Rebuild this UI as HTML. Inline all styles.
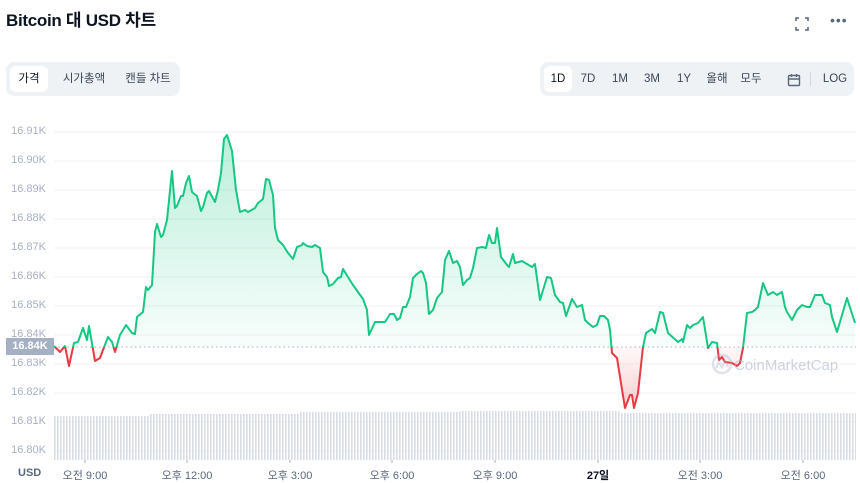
<!DOCTYPE html>
<html><head><meta charset="utf-8"><style>
body{margin:0;width:860px;height:482px;background:#fff;font-family:"Liberation Sans","Noto Sans CJK KR",sans-serif;overflow:hidden;position:relative;color:#0d1421}
.t{position:absolute;left:6px;top:6px;font-size:17px;font-weight:bold;letter-spacing:-0.3px}
.grp{position:absolute;top:62px;height:34px;background:#eff2f5;border-radius:8px}
.b{position:absolute;top:4px;height:26px;line-height:26px;font-size:11.5px;color:#3a4556;text-align:center}
.b.on{background:#fff;border-radius:6px;color:#0d1421}
.yl{position:absolute;right:814px;font-size:11px;color:#a6b0c3;text-align:right}
.xl{position:absolute;top:467px;font-size:11px;color:#58667e;transform:translateX(-50%);white-space:nowrap}
</style></head><body>
<div class="t">Bitcoin 대 USD 차트</div>
<svg style="position:absolute;left:794px;top:16px" width="16" height="16" viewBox="0 0 16 16" fill="none" stroke="#58667e" stroke-width="1.6"><path d="M2 5V2h3M11 2h3v3M14 11v3h-3M5 14H2v-3"/></svg>
<div style="position:absolute;left:830px;top:12px;font-size:14px;color:#58667e;letter-spacing:1px">•••</div>
<div class="grp" style="left:6px;width:174px">
<div class="b on" style="left:4px;width:38px">가격</div>
<div class="b" style="left:46px;width:64px">시가총액</div>
<div class="b" style="left:110px;width:64px">캔들 차트</div>
</div>
<div class="grp" style="left:540px;width:314px">
<div class="b on" style="left:4px;width:28px">1D</div>
<div class="b" style="left:34px;width:28px">7D</div>
<div class="b" style="left:66px;width:28px">1M</div>
<div class="b" style="left:98px;width:28px">3M</div>
<div class="b" style="left:130px;width:28px">1Y</div>
<div class="b" style="left:162px;width:30px">올해</div>
<div class="b" style="left:196px;width:30px">모두</div>
<svg style="position:absolute;left:247px;top:11px" width="14" height="14" viewBox="0 0 14 14" fill="none" stroke="#58667e" stroke-width="1.4"><rect x="1.5" y="2.5" width="11" height="10" rx="1"/><path d="M1.5 6h11M4.5 1v3M9.5 1v3"/></svg>
<div style="position:absolute;left:270px;top:10px;width:1px;height:14px;background:#cfd6e4"></div>
<div class="b" style="left:278px;width:34px">LOG</div>
</div>
<div class="yl" style="top:125px">16.91K</div>
<div class="yl" style="top:154px">16.90K</div>
<div class="yl" style="top:183px">16.89K</div>
<div class="yl" style="top:212px">16.88K</div>
<div class="yl" style="top:241px">16.87K</div>
<div class="yl" style="top:270px">16.86K</div>
<div class="yl" style="top:299px">16.85K</div>
<div class="yl" style="top:328px">16.84K</div>
<div class="yl" style="top:357px">16.83K</div>
<div class="yl" style="top:386px">16.82K</div>
<div class="yl" style="top:415px">16.81K</div>
<div class="yl" style="top:444px">16.80K</div>
<div style="position:absolute;left:6px;top:338px;width:48px;height:17px;background:#a6b0c3;color:#fff;font-size:11px;font-weight:bold;line-height:17px;text-align:center">16.84K</div>
<div style="position:absolute;left:18px;top:467px;font-size:11px;font-weight:bold;color:#58667e">USD</div>
<svg style="position:absolute;left:0;top:0" width="860" height="482">
<defs>
<linearGradient id="gg" x1="0" y1="130" x2="0" y2="347" gradientUnits="userSpaceOnUse"><stop offset="0" stop-color="#16c784" stop-opacity="0.3"/><stop offset="1" stop-color="#16c784" stop-opacity="0.03"/></linearGradient>
<linearGradient id="rg" x1="0" y1="347" x2="0" y2="410" gradientUnits="userSpaceOnUse"><stop offset="0" stop-color="#ea3943" stop-opacity="0.03"/><stop offset="1" stop-color="#ea3943" stop-opacity="0.25"/></linearGradient>
<clipPath id="up"><rect x="0" y="0" width="860" height="347"/></clipPath>
<clipPath id="dn"><rect x="0" y="347" width="860" height="135"/></clipPath>
<pattern id="vb" width="3" height="10" patternUnits="userSpaceOnUse"><rect width="1.6" height="10" fill="#d8dce4"/></pattern>
<path id="p" d="M54,346 60,352 65,346 69,366 74,343 78,342 83,328 87,340 89,326 95,361 100,358 103,350 108,337 112,342 115,352 120,335 126,325 132,333 135,334 137,317 143,312 146,287 148,290 152,285 155,232 157,224 161,237 163,235 167,220 172,171 175,208 177,206 181,196 183,196 186,183 189,176 192,192 197,196 201,211 203,207 207,193 209,191 215,202 218,190 221,173 224,139 227,135 232,151 236,190 240,212 245,210 248,212 255,208 258,203 263,199 266,179 269,180 273,195 275,228 278,240 283,245 288,253 293,259 297,247 302,245 303,243 307,246 312,247 315,245 320,248 323,272 327,277 329,286 333,284 338,278 341,277 343,269 348,277 353,285 358,292 363,299 367,310 369,335 375,322 380,322 385,322 390,314 394,314 397,320 400,318 403,307 406,307 410,297 413,278 417,274 421,271 423,273 426,283 429,314 433,310 437,298 442,292 445,260 449,251 453,263 457,261 460,267 463,285 467,280 470,278 473,268 477,248 482,247 486,248 489,235 492,243 495,243 497,228 501,257 507,265 509,267 513,254 515,263 522,261 527,264 532,267 535,264 540,300 547,277 551,278 555,295 560,302 563,303 566,316 572,299 577,307 582,305 585,320 588,323 593,327 597,325 600,316 604,316 608,320 610,330 612,353 617,358 620,377 625,408 630,395 632,395 634,408 638,393 643,347 646,333 652,329 655,333 660,312 663,313 668,333 678,342 682,339 683,342 687,325 690,328 693,325 698,323 703,317 708,348 712,342 717,343 719,360 722,357 725,362 732,363 737,366 740,363 743,348 747,313 752,312 755,310 758,307 763,283 768,295 773,292 777,295 782,292 785,307 787,312 792,320 797,310 802,305 807,307 810,307 815,295 822,295 825,303 830,305 832,317 837,332 847,298 855,323"/>
<path id="pf" d="M54,346 60,352 65,346 69,366 74,343 78,342 83,328 87,340 89,326 95,361 100,358 103,350 108,337 112,342 115,352 120,335 126,325 132,333 135,334 137,317 143,312 146,287 148,290 152,285 155,232 157,224 161,237 163,235 167,220 172,171 175,208 177,206 181,196 183,196 186,183 189,176 192,192 197,196 201,211 203,207 207,193 209,191 215,202 218,190 221,173 224,139 227,135 232,151 236,190 240,212 245,210 248,212 255,208 258,203 263,199 266,179 269,180 273,195 275,228 278,240 283,245 288,253 293,259 297,247 302,245 303,243 307,246 312,247 315,245 320,248 323,272 327,277 329,286 333,284 338,278 341,277 343,269 348,277 353,285 358,292 363,299 367,310 369,335 375,322 380,322 385,322 390,314 394,314 397,320 400,318 403,307 406,307 410,297 413,278 417,274 421,271 423,273 426,283 429,314 433,310 437,298 442,292 445,260 449,251 453,263 457,261 460,267 463,285 467,280 470,278 473,268 477,248 482,247 486,248 489,235 492,243 495,243 497,228 501,257 507,265 509,267 513,254 515,263 522,261 527,264 532,267 535,264 540,300 547,277 551,278 555,295 560,302 563,303 566,316 572,299 577,307 582,305 585,320 588,323 593,327 597,325 600,316 604,316 608,320 610,330 612,353 617,358 620,377 625,408 630,395 632,395 634,408 638,393 643,347 646,333 652,329 655,333 660,312 663,313 668,333 678,342 682,339 683,342 687,325 690,328 693,325 698,323 703,317 708,348 712,342 717,343 719,360 722,357 725,362 732,363 737,366 740,363 743,348 747,313 752,312 755,310 758,307 763,283 768,295 773,292 777,295 782,292 785,307 787,312 792,320 797,310 802,305 807,307 810,307 815,295 822,295 825,303 830,305 832,317 837,332 847,298 855,323 L855,347 L54,347Z"/>
</defs>
<g stroke="#eff2f5" stroke-width="1">
<path d="M54 132H856M54 161H856M54 190H856M54 219H856M54 248H856M54 277H856M54 306H856M54 335H856M54 364H856M54 393H856M54 422H856M54 451H856"/>
</g>
<path d="M54 416H150V414H300V412H460V411H620V413H856V460H54Z" fill="url(#vb)"/>
<path d="M54 347H856" stroke="#a6b0c3" stroke-dasharray="1.5 3" stroke-width="1"/>
<use href="#pf" fill="url(#gg)" clip-path="url(#up)"/>
<use href="#pf" fill="url(#rg)" clip-path="url(#dn)"/>
<use href="#p" fill="none" stroke="#16c784" stroke-width="2" stroke-linejoin="round" clip-path="url(#up)"/>
<use href="#p" fill="none" stroke="#ea3943" stroke-width="2" stroke-linejoin="round" clip-path="url(#dn)"/>
<g opacity="0.35" fill="none" stroke="#a6b0c3" stroke-width="2.5"><circle cx="722" cy="364" r="9"/><path d="M716 368l3-6 3 5 3-6 3 6"/></g>
<text x="734" y="370" font-family="Liberation Sans" font-size="15" fill="#a6b0c3" opacity="0.55">CoinMarketCap</text>
<g stroke="#a6b0c3" stroke-width="1"><path d="M85 460v3M187 460v3M290 460v3M392 460v3M495 460v3M598 460v3M700 460v3M803 460v3"/></g>
</svg>
<div class="xl" style="left:85px">오전 9:00</div>
<div class="xl" style="left:187px">오후 12:00</div>
<div class="xl" style="left:290px">오후 3:00</div>
<div class="xl" style="left:392px">오후 6:00</div>
<div class="xl" style="left:495px">오후 9:00</div>
<div class="xl" style="left:598px;font-weight:bold;color:#0d1421">27일</div>
<div class="xl" style="left:700px">오전 3:00</div>
<div class="xl" style="left:803px">오전 6:00</div>
</body></html>
